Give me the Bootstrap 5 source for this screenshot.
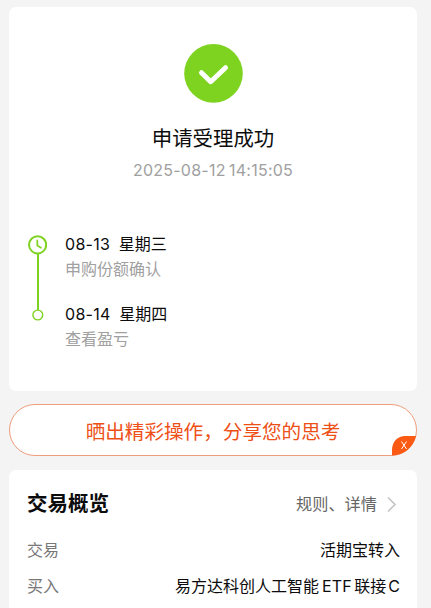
<!DOCTYPE html>
<html lang="zh-CN">
<head>
<meta charset="utf-8">
<meta name="viewport" content="width=device-width, initial-scale=1">
<title>申请受理成功</title>
<link href="https://cdn.jsdelivr.net/npm/bootstrap@5.3.0/dist/css/bootstrap.min.css" rel="stylesheet">
<style>
body{background:#f4f4f4;color:#0c0c0c;font-family:Inter,"Noto Sans CJK SC",sans-serif;font-size:16px;line-height:24px;overflow:hidden}
.page{width:431px;height:608px;padding:7px 14px 0 9px;overflow:hidden}
.panel{background:#fff;border-radius:7px}
.result{height:383.5px;padding:36px 18px 0}
.result-title{font-size:20.4px;line-height:30px;margin-top:21px}
.result-time{font-size:16px;letter-spacing:.25px;word-spacing:-1.5px;color:#a0a0a0;margin-top:4px}
.steps{margin-top:50px}
.rail{width:20px;margin-right:18px}
.step-gap{margin-bottom:20px}
.step-text{line-height:25px;height:25px}
.date{letter-spacing:.3px;margin-right:8.5px}
.muted{color:#a0a0a0}
.promo{height:52px;margin-top:13.5px;background:#fff;border:1px solid #ef9d7c;border-radius:26px;color:#ee4f16;font-size:19.6px;line-height:30px;padding-top:3px}
.promo-close{right:-1px;bottom:-1px}
.overview{height:150px;margin-top:14px;padding:19px 17px 0 18px}
.overview-title{font-size:20.5px;line-height:30px}
.link-text{color:#666;font-size:16.2px;line-height:22px;margin-right:1px}
.label-text{color:#777}
.rows{margin-top:19px}
.row-line{height:24px;margin-bottom:12px}
.etf{letter-spacing:.1px;margin:0 2.5px 0 3px}
.share-class{margin-left:2px}
</style>
<script src="https://cdn.jsdelivr.net/npm/bootstrap@5.3.0/dist/js/bootstrap.bundle.min.js"></script>
</head>
<body>
<main class="page text-nowrap">
  <section class="panel result">
    <div class="d-flex flex-column align-items-center">
      <svg width="60" height="60" viewBox="0 0 60 60"><circle cx="30.500" cy="30.4" r="29.3" fill="#7ed321"/><path d="M18.500 29.700 27.700 38.700 42.500 24.700" fill="none" stroke="#fff" stroke-width="5" stroke-linecap="round" stroke-linejoin="round" /></svg>
      <h1 class="result-title fw-normal mb-0">申请受理成功</h1>
      <div class="result-time">2025-08-12 14:15:05</div>
    </div>
    <div class="steps d-flex">
      <svg class="rail" width="20" height="92" viewBox="0 0 20 92" fill="none" stroke="#7ed321"><path d="M11 20V80" stroke-width="2"/><circle cx="10.6" cy="12.8" r="8.6" stroke-width="2" fill="#fff"/><path d="M10.300 8.300v5.200l3.600 2.200" stroke-width="1.7" stroke-linecap="round" stroke-linejoin="round"/><circle cx="10.8" cy="83" r="4.9" stroke-width="1.4" fill="#fff"/></svg>
      <div>
        <div class="step-gap">
          <div class="step-text"><span class="date">08-13</span>星期三</div>
          <div class="step-text muted">申购份额确认</div>
        </div>
        <div class="step-text"><span class="date">08-14</span>星期四</div>
        <div class="step-text muted">查看盈亏</div>
      </div>
    </div>
  </section>
  <section class="promo position-relative d-flex align-items-center justify-content-center">
    <span>晒出精彩操作，分享您的思考</span>
    <svg class="promo-close position-absolute" width="26" height="21" viewBox="0 0 26 21"><path d="M1 20.500V15C1 6.500 7 1 14 1H25C22.500 12 13 20.500 1 20.500Z" fill="#fa5a14"/><path d="M10.500 6.500 15.500 14M15.500 6.500 10.500 14" stroke="#fff" stroke-width="1"/></svg>
  </section>
  <section class="panel overview">
    <div class="d-flex justify-content-between align-items-center">
      <h2 class="overview-title fw-bold mb-0">交易概览</h2>
      <div class="d-flex align-items-center link-text">规则、详情<svg class="ms-2" width="14" height="18" viewBox="0 0 14 18"><path d="M3 2.500 10 9.500 3 16.500" fill="none" stroke="#c4c4c4" stroke-width="1.600"/></svg></div>
    </div>
    <div class="rows">
      <div class="row-line d-flex justify-content-between"><span class="label-text">交易</span><span>活期宝转入</span></div>
      <div class="row-line d-flex justify-content-between"><span class="label-text">买入</span><span>易方达科创人工智能<span class="etf">ETF</span>联接<span class="share-class">C</span></span></div>
    </div>
  </section>
</main>
</body>
</html>
